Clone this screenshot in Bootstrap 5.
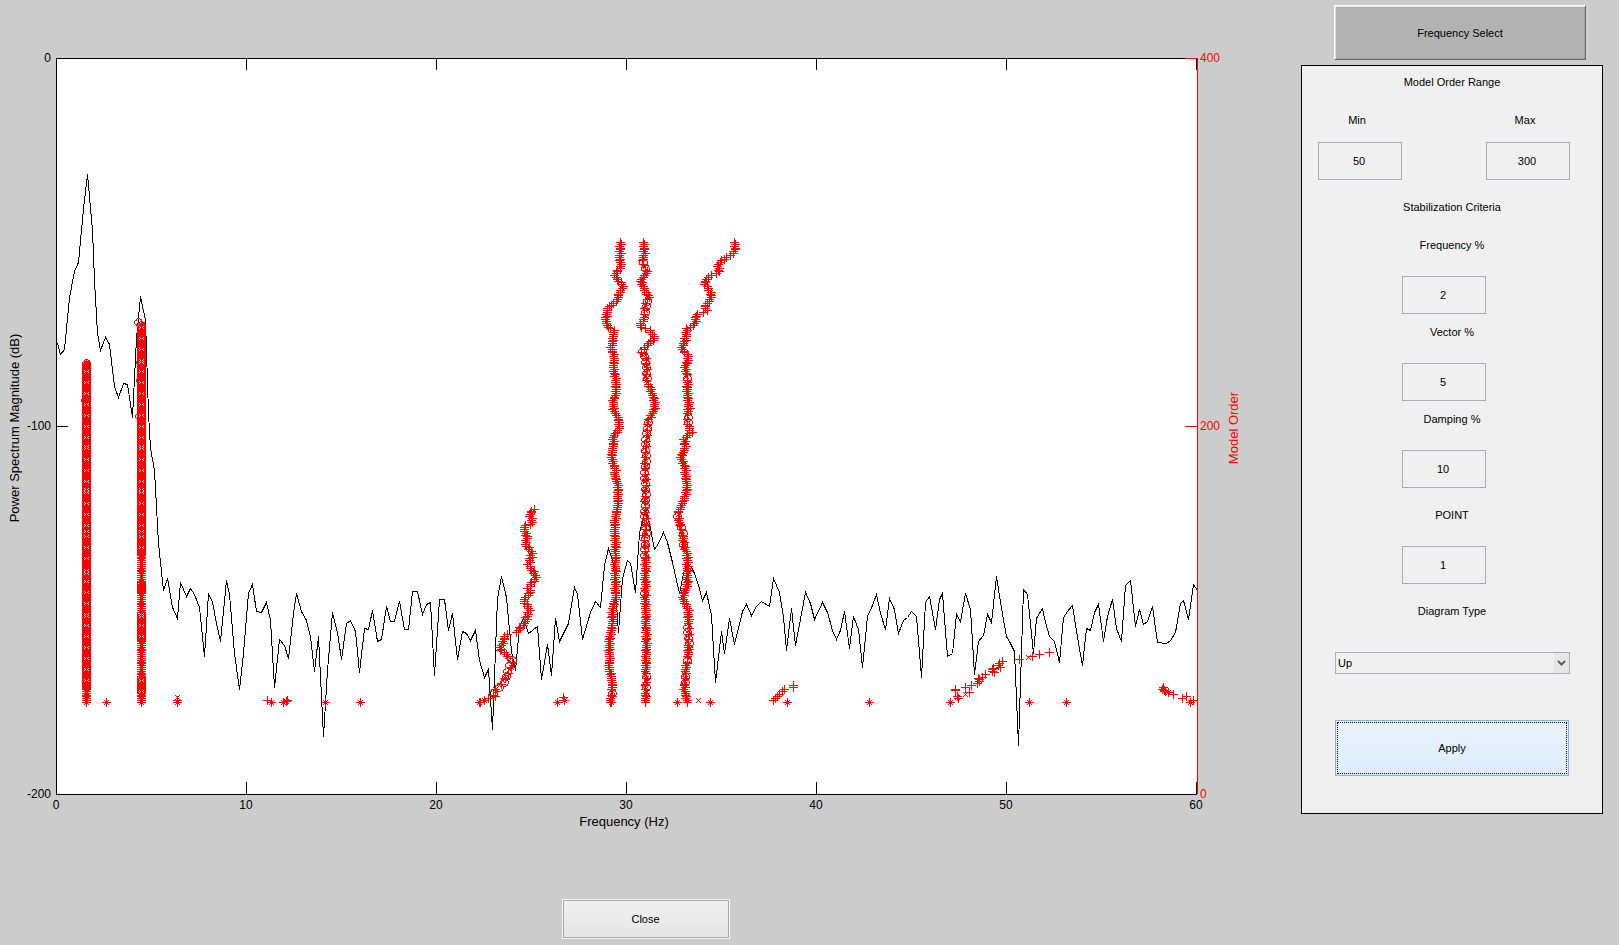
<!DOCTYPE html>
<html lang="en">
<head>
<meta charset="utf-8">
<meta name="viewport" content="width=device-width, initial-scale=1">
<title>Stabilization Diagram</title>
<link href="https://cdn.jsdelivr.net/npm/bootstrap@5.3.0/dist/css/bootstrap.min.css" rel="stylesheet">
<style>
  body { background: #ccc; color: #000; font-family: "Liberation Sans", Arial, sans-serif; font-size: 11px; line-height: 16px; }
  .plot-area { min-width: 0; }
  .sidebar { width: 318px; padding: 5px 16px 0 0; }
  .plot { display: block; width: 100%; height: auto; }
  .plot text { font-size: 12px; }
  .plot .axis-title { font-size: 13px; }
  .btn { --bs-btn-font-size: 11px; --bs-btn-line-height: 16px; --bs-btn-border-radius: 0; --bs-btn-color: #000; --bs-btn-hover-color: #000; }
  .btn-raised { height: 55px; margin: 0 17px 5px 33px; background: #b2b2b2; border: 1px solid; border-color: #fff #696969 #696969 #fff; box-shadow: inset 1px 1px #e3e3e3, inset -1px -1px #a0a0a0; }
  .btn-close-plot { width: 168px; height: 40px; margin: 59px 10px 5px 0; background: linear-gradient(#f0f0f0, #e5e5e5); border: 1px solid #f3f3f3; box-shadow: inset 0 0 0 1px #acacac; }
  .btn-apply { height: 56px; margin: 46px 33px 37px; background: linear-gradient(#ebf3fc, #dcecfc); border: 1px solid #7eb4ea; outline: 1px dotted #000; outline-offset: -3px; }
  .panel { background: #f0f0f0; border: 1px solid #000; padding-top: 8px; }
  .panel label, .panel h2 { font-size: 11px; font-weight: 400; line-height: 16px; margin: 0; text-align: center; display: block; }
  .panel .criteria-title { margin-bottom: 22px; }
  .panel .form-control { width: 84px; height: 38px; }
  .panel .form-control, .panel .form-select { font-size: 11px; line-height: 16px; padding: 0 2px; color: #000; background-color: #f0f0f0; border: 1px solid #abadb3; border-radius: 0; }
  .panel .form-control { text-align: center; padding-right: 4px; }
  .panel .form-select { height: 22px; background-image: url("data:image/svg+xml,%3Csvg xmlns='http://www.w3.org/2000/svg' width='15' height='20'%3E%3Cpath fill='%23e6e6e6' d='M0 0h15v20H0z'/%3E%3Cpath fill='none' stroke='%23606060' stroke-width='2' d='M4 8l3.500 3.500L11 8'/%3E%3C/svg%3E"); background-position: right 0 center; background-size: 15px 20px; }
  .range-row { margin: 22px 32px 19px 16px; }
  .panel .range-row label { margin: 0 6px 14px 0; }
  .field { margin-bottom: 19px; }
  .field.tight { margin-bottom: 10px; }
  .panel .field label { margin-bottom: 23px; }
  .field .form-control { margin: 0 auto; }
  .field .shifted { padding-right: 16px; }
  .select-field { margin: 33px 32px 0 33px; }
</style>
</head>
<body>
<main class="d-flex align-items-start">
  <section class="plot-area flex-grow-1 d-flex flex-column align-items-center">
    <svg class="plot" viewBox="0 0 1301 840" role="img" aria-label="Stabilization diagram">
      <rect x="56" y="58" width="1141" height="736" fill="#fff"/>
      <polyline id="spectrum" fill="none" stroke="#000" shape-rendering="crispEdges"/>
      <g shape-rendering="crispEdges" fill="none">
        <path id="axes" stroke="#000"/>
        <path stroke="#f00" d="M1197.500 58V794M1185 58.500h12M1185 426.500h12"/>
        <path id="crosses" stroke="#f00"/>
        <path id="circles" stroke="#f00"/>
        <path id="gaps" stroke="#fff"/>
      </g>
      <g id="xlabels" text-anchor="middle"></g>
      <g text-anchor="end">
        <text x="51" y="62">0</text><text x="51" y="430">-100</text><text x="51" y="798">-200</text>
      </g>
      <g fill="#f00">
        <text x="1200" y="62">400</text><text x="1200" y="430">200</text><text x="1200" y="798">0</text>
        <text class="axis-title" text-anchor="middle" transform="translate(1238 428) rotate(-90)">Model Order</text>
      </g>
      <text class="axis-title" text-anchor="middle" x="624" y="826">Frequency (Hz)</text>
      <text class="axis-title" text-anchor="middle" transform="translate(19 428) rotate(-90)">Power Spectrum Magnitude (dB)</text>
    </svg>
    <button type="button" class="btn btn-close-plot p-0">Close</button>
  </section>

  <aside class="sidebar flex-shrink-0 d-flex flex-column">
    <button type="button" class="btn btn-raised p-0">Frequency Select</button>
    <form class="panel d-flex flex-column" onsubmit="return false">
      <h2>Model Order Range</h2>
      <div class="range-row d-flex justify-content-between">
        <div><label for="min">Min</label><input id="min" class="form-control" value="50"></div>
        <div><label for="max">Max</label><input id="max" class="form-control" value="300"></div>
      </div>
      <h2 class="criteria-title">Stabilization Criteria</h2>
      <div class="field tight"><label for="freq">Frequency %</label><div class="shifted"><input id="freq" class="form-control" value="2"></div></div>
      <div class="field tight"><label for="vec">Vector %</label><div class="shifted"><input id="vec" class="form-control" value="5"></div></div>
      <div class="field"><label for="damp">Damping %</label><div class="shifted"><input id="damp" class="form-control" value="10"></div></div>
      <div class="field"><label for="point">POINT</label><div class="shifted"><input id="point" class="form-control" value="1"></div></div>
      <label for="type">Diagram Type</label>
      <div class="select-field"><select id="type" class="form-select"><option>Up</option><option>Down</option></select></div>
      <button type="button" class="btn btn-apply p-0">Apply</button>
    </form>
  </aside>
</main>
<script src="https://cdn.jsdelivr.net/npm/bootstrap@5.3.0/dist/js/bootstrap.bundle.min.js"></script>
<script>
  const $ = id => document.getElementById(id);
  const pairs = s => s.trim().split(/\s+/).filter(Boolean).map(p => p.split(',').map(Number));

  // axes: 19 plot units per hertz
  let axes = 'M56.500 58V794.500M56 58.500H1185M56 794.500H1197M57 426.500h11';
  for (let f = 0; f <= 60; f += 10) {
    const x = 56 + f * 19;
    if (f) axes += `M${x + .5} 59v11M${x + .5} 794v-12`;
    $('xlabels').insertAdjacentHTML('beforeend', `<text x="${x}" y="809">${f}</text>`);
  }
  $('axes').setAttribute('d', axes);

  // power spectrum
  const spectrum = `57,343 60,354 64,349 69,297 74,271 78,262 83,208 87,174 92,230 94,280 97,333 100,350 105,337 109,344 114,386 118,397 123,383 127,384 132,417 136,338 140,296 145,320 148,413 150,448 154,470 158,543 163,590 167,578 172,607 177,618 180,582 186,596 190,588 194,594 199,607 204,656 208,593 212,602 216,623 220,641 226,580 229,594 234,653 239,689 243,653 248,593 252,584 256,611 261,612 266,602 270,620 274,687 279,639 284,645 288,658 293,613 296,593 301,611 306,620 310,636 314,671 318,636 323,736 327,670 332,612 337,632 341,659 346,623 350,620 355,631 359,672 364,628 368,629 372,610 377,641 381,639 386,606 390,621 394,621 399,601 404,629 408,629 412,591 417,591 422,614 426,604 430,602 434,675 439,599 444,599 448,630 452,613 457,659 462,631 466,633 470,640 475,630 479,660 484,677 488,669 492,729 497,598 501,576 506,597 511,651 515,670 519,627 523,617 528,633 537,626 541,679 547,644 551,675 555,618 559,641 568,623 574,587 577,594 582,639 590,612 595,601 600,607 604,565 608,548 613,563 618,632 622,578 627,560 630,563 635,592 639,533 645,508 649,523 654,549 658,543 663,532 667,542 672,562 676,580 679,593 683,573 687,563 691,567 694,573 698,585 702,600 706,592 711,615 715,682 721,631 724,653 729,618 734,644 742,611 746,604 751,615 756,606 761,601 769,606 773,578 779,592 783,617 786,650 791,608 795,645 805,592 810,603 814,619 822,602 827,612 832,630 836,639 840,630 844,611 849,648 853,616 858,629 862,667 867,616 872,605 876,594 880,613 885,629 889,598 894,609 898,633 903,620 907,617 911,611 916,616 921,677 925,602 929,596 935,629 939,599 942,593 947,656 952,653 956,614 960,621 965,593 970,609 974,674 978,641 983,635 987,614 991,622 996,576 1001,608 1006,636 1010,643 1014,651 1018,745 1023,589 1027,594 1033,653 1036,618 1042,608 1045,622 1049,636 1054,641 1059,662 1063,617 1067,611 1072,605 1077,637 1082,665 1086,628 1090,630 1094,612 1098,604 1103,641 1107,616 1112,599 1116,628 1121,641 1125,585 1130,580 1135,626 1139,609 1143,624 1147,621 1152,606 1157,642 1166,643 1170,640 1175,632 1180,603 1183,600 1188,619 1193,584 1197,590`;
  $('spectrum').setAttribute('points', pairs(spectrum).map(([x, y]) => `${x + .5},${y + .5}`).join(' '));

  // markers
  let crosses = '', circles = '', gaps = '';
  const plus = (x, y) => crosses += `M${x - 4} ${y + .5}h9M${x + .5} ${y - 4}v9`;
  const ex = (x, y) => crosses += `M${x - 2} ${y - 2}l5 5M${x - 2} ${y + 3}l5 -5`;
  const ring = (x, y) => circles += `M${x - 1} ${y - 3.5}h3M${x - 1} ${y + 4.5}h3M${x - 3.5} ${y - 1}v3M${x + 4.5} ${y - 1}v3M${x - 3} ${y - 1.5}h1v-1h1M${x + 4} ${y - 1.5}h-1v-1h-1M${x - 3} ${y + 2.5}h1v1h1M${x + 4} ${y + 2.5}h-1v1h-1`;
  const gap = (x, y) => gaps += `M${x - 2} ${y - .5}h1M${x + 2} ${y - .5}h1M${x - 1} ${y + .5}h1M${x + 1} ${y + .5}h1M${x - 2} ${y + 1.5}h1M${x + 2} ${y + 1.5}h1`;
  const within = (spans, y) => spans.some(([a, b]) => y >= a && y <= b);

  // a pole is traced upward, one marker per model order
  function pole(path, ringSpans, exSpans, wobble, solid) {
    const pts = pairs(path), rings = pairs(ringSpans), exes = pairs(exSpans);
    for (let n = 50; n <= 300; n++) {
      const y = 794 - n * 1.84;
      if (y < pts[0][1] - 1) break;
      let i = 0;
      while (i < pts.length - 2 && pts[i + 1][1] < y) i++;
      const [x0, y0] = pts[i], [x1, y1] = pts[i + 1];
      const t = y1 > y0 ? Math.max(0, Math.min(1, (y - y0) / (y1 - y0))) : 0;
      const x = Math.round(x0 + (x1 - x0) * t + Math.sin(n * 2.4) * wobble), yy = Math.round(y);
      const isRing = within(rings, y);
      if (solid) {
        plus(x, yy);
        ex(x, yy);
        if (isRing) {
          crosses += `M${x - 4} ${yy + 1.5}h9`;
          ring(x, yy);
          if (n % 6 === 2 || n % 23 === 5) gap(x, yy);
        }
      } else if (isRing && n % 3 !== 0) {
        if (n % 3 === 1) ring(x, yy);
        else ex(x, yy);
      } else {
        plus(x, yy);
        if (within(exes, y) && n % 2) ex(x, yy);
      }
    }
  }
  pole('86,363 86,702', '362,689', '', 0, true);
  pole('141,324 141,702', '323,553 584,590 613,640 677,691', '', 0, true);
  [[138, 322], [140, 362], [140, 380], [139, 416], [85, 400]].forEach(([x, y]) => ring(x, y));
  pole('533,509 529,514 532,522 523,527 527,537 525,543 532,553 528,564 533,572 536,577 528,587 530,592 523,600 529,608 525,622 520,627 517,632 505,634 503,642 499,648 504,653 513,660 507,673 502,683 493,692 494,697 487,699 479,702', '656,693', '510,516 655,690 700,703', 1.2);
  pole('620,243 620,253 619,260 621,265 614,275 623,286 618,295 618,299 608,307 605,320 608,327 613,330 613,340 611,347 614,357 613,365 615,377 616,392 613,400 613,410 618,417 619,428 613,437 613,445 611,457 615,470 614,473 618,487 617,507 614,523 615,540 615,597 612,610 612,627 609,640 609,667 612,683 612,693 610,702', '690,696', '262,267 694,703', .6);
  pole('643,243 644,253 642,263 647,272 640,280 643,287 649,297 645,303 645,317 639,326 649,330 655,337 646,345 641,352 646,358 646,380 650,388 654,400 654,410 648,420 647,433 645,443 645,480 645,520 645,600 646,640 645,702', '261,268 300,316 350,383 418,558 588,595 674,680 686,692', '262,266 356,380 430,703', .7);
  pole('734,243 735,250 732,254 724,258 717,265 719,272 707,277 704,283 710,291 711,298 704,306 707,310 695,315 695,323 686,329 685,340 681,348 688,356 685,367 687,380 687,393 689,407 687,413 687,422 691,432 684,438 685,447 680,457 685,467 685,475 687,487 683,500 677,515 682,533 684,547 687,553 687,583 682,598 688,610 688,657 685,670 684,690 687,702', '376,381 413,424 512,518 526,534 543,547 622,646 656,660 674,684', '413,424 515,550 560,600 620,703', .8);

  pairs('106,702 177,702 271,702 283,702 286,701 325,702 360,702 479,702 557,702 564,700 611,702 677,702 710,702 787,702 869,702 950,702 1029,702 1066,702 1162,689 1168,692 1190,702').forEach(([x, y]) => { plus(x, y); ex(x, y); });
  pairs('177,700 267,700 287,700 563,697 773,700 775,698 777,696 779,694 782,691 784,689 793,687 793,685 955,690 955,689 957,696 958,698 965,687 971,685 969,692 977,683 979,679 978,678 979,681 982,677 985,674 992,669 992,671 994,672 998,665 993,668 999,663 1000,667 1002,661 1019,659 1032,656 1039,654 1049,652 1163,687 1164,690 1165,691 1173,694 1182,698 1186,696 1193,700').forEach(([x, y]) => plus(x, y));
  pairs('177,697 698,700 965,694 979,680 1028,657 957,697').forEach(([x, y]) => ex(x, y));
  $('crosses').setAttribute('d', crosses);
  $('circles').setAttribute('d', circles);
  $('gaps').setAttribute('d', gaps);
</script>
</body>
</html>
